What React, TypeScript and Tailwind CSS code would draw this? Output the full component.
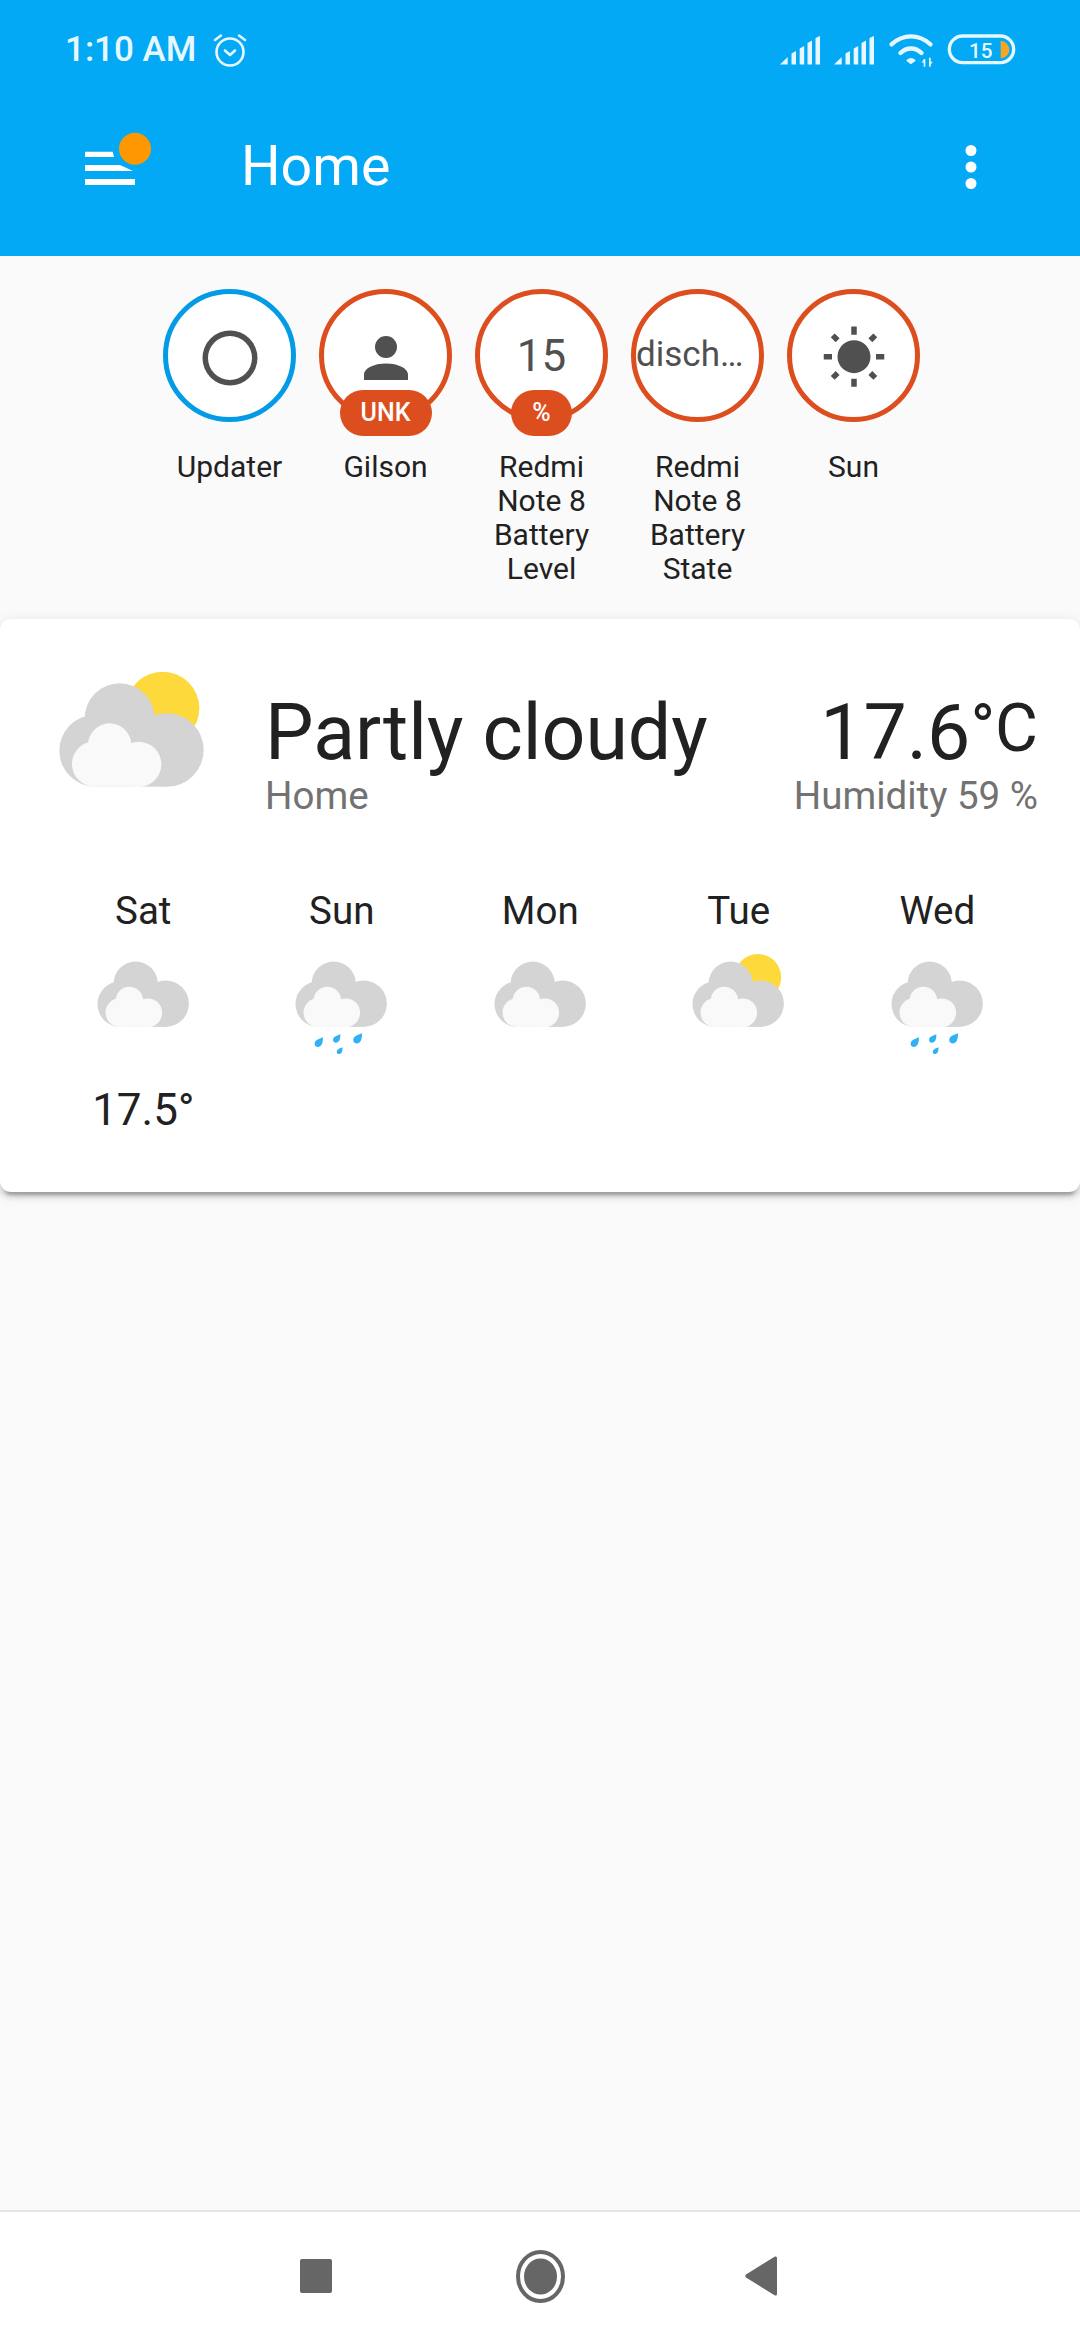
import type { ReactNode } from 'react';

const TEXT_STATUS = '#e6f7ff';

function SignalBars() {
  return (
    <svg width="40" height="29" viewBox="0 0 40 29" fill={TEXT_STATUS}>
      <path d="M0 28.5 L7.7 21 V28.5 Z" />
      <path d="M11.500 17.5 L16 15 V28.5 H11.500 Z" />
      <path d="M19.700 12.5 L24.200 10 V28.5 H19.700 Z" />
      <path d="M27.500 7 L32 4.5 V28.5 H27.500 Z" />
      <path d="M35.500 2 L40 0 V28.5 H35.500 Z" />
    </svg>
  );
}

function WifiIcon() {
  return (
    <svg width="47" height="35" viewBox="445 98 140 105" fill="none" stroke={TEXT_STATUS}>
      <path d="M455 132 C490 100 537 100 572 132" strokeWidth="13" strokeLinecap="round" />
      <path d="M482 158 C500 140 527 140 545 158" strokeWidth="13" strokeLinecap="round" />
      <path d="M499 181 C507 170 520 170 528 181 L513 192 Z" fill={TEXT_STATUS} stroke="none" />
      <path d="M554 176 V199 M570 172 V199" strokeWidth="5" />
      <path d="M547 186 L554 176 L554 186 Z M570 195 L577 185 L570 185 Z" fill={TEXT_STATUS} strokeWidth="2" />
    </svg>
  );
}

function BatteryIcon() {
  return (
    <svg width="70" height="32" viewBox="623 100 210 96">
      <rect x="630" y="106" width="193" height="80" rx="40" fill="none" stroke={TEXT_STATUS} strokeWidth="10" />
      <text x="724" y="173" textAnchor="middle" fontSize="62" fontWeight="500" fontFamily="Roboto" fill={TEXT_STATUS}>
        15
      </text>
      <path d="M784 120 C800 122 810 134 810 147 C810 160 800 171 784 173 Z" fill="#f5a623" />
    </svg>
  );
}

function AlarmIcon() {
  return (
    <svg width="36" height="36" viewBox="0 0 36 36" fill="none" stroke={TEXT_STATUS} strokeWidth="2.6" strokeLinecap="round" strokeLinejoin="round">
      <circle cx="18" cy="20" r="13.5" />
      <path d="M13 18.5 L18 23 L23 18.5" />
      <path d="M3 8 L9 3.5 M33 8 L27 3.5" />
    </svg>
  );
}

function MenuIcon() {
  return (
    <svg width="70" height="70" viewBox="0 0 70 70">
      <path d="M0 19.700 H27.700 L29 25 H0 Z" fill="#ffffff" />
      <path d="M0 33 H35 L48 39 H0 Z" fill="#ffffff" />
      <path d="M0 47 H50 V53 H0 Z" fill="#ffffff" />
      <circle cx="50" cy="16.700" r="16" fill="#ff9800" />
    </svg>
  );
}

// Same artwork at both sizes, coordinates are from the large icon at 3x
function WeatherIcon({ width, sun, rain }: { width: number; sun?: boolean; rain?: boolean }) {
  const drop = 'M12 -15 C11 -8 13 10 -2 12 C-13 12 -14 -2 -6 -7 C0 -11 8 -13 12 -15 Z';
  return (
    <svg width={width} height={(width * 480) / 450} viewBox="170 180 450 480" className="block">
      {sun && <circle cx="487" cy="295" r="110" fill="#fdd93c" />}
      <g fill="#d4d4d4">
        <circle cx="285" cy="422" r="108" />
        <circle cx="358" cy="325" r="105" />
        <circle cx="500" cy="420" r="110" />
        <rect x="285" y="400" width="215" height="130" />
      </g>
      <g fill="#f9f9f9">
        <circle cx="328" cy="405" r="65" />
        <circle cx="283" cy="462" r="68" />
        <circle cx="415" cy="463" r="68" />
        <rect x="283" y="440" width="132" height="90" />
      </g>
      {rain && (
        <g fill="#30b0f5">
          <path d={drop} transform="translate(287 605) scale(1.7)" />
          <path d={drop} transform="translate(372 587) scale(1.5)" />
          <path d={drop} transform="translate(471 587) scale(1.8)" />
          <path d={drop} transform="translate(386 645) scale(1.2)" />
        </g>
      )}
    </svg>
  );
}

function MdiIcon({ d }: { d: string }) {
  return (
    <svg width="66" height="66" viewBox="0 0 24 24" fill="#505050" className="mt-[5px]">
      <path d={d} />
    </svg>
  );
}

function Badge({
  color,
  label,
  pill,
  pillWidth,
  children,
}: {
  color: string;
  label: string;
  pill?: string;
  pillWidth?: string;
  children: ReactNode;
}) {
  return (
    <div className="flex w-[156px] flex-col items-center">
      <div
        className="relative flex h-[133px] w-[133px] items-center justify-center rounded-full border-[5.5px] bg-white"
        style={{ borderColor: color }}
      >
        {children}
        {pill && (
          <div
            className={`absolute top-[96px] flex h-[46px] items-center justify-center rounded-[23px] bg-[#dd4e1f] text-[25px] font-medium text-white ${pillWidth}`}
          >
            {pill}
          </div>
        )}
      </div>
      <div className="mt-[28px] w-[132px] text-center text-[30px] leading-[34px] text-[#212121]">{label}</div>
    </div>
  );
}

function ForecastDay({ day, sun, rain, temp }: { day: string; sun?: boolean; rain?: boolean; temp?: string }) {
  return (
    <div className="flex w-[198.500px] flex-col items-center">
      <div className="text-[38.500px] leading-[45px] text-[#212121]">{day}</div>
      <div className="mt-[20px] h-[101px]">
        <WeatherIcon width={95} sun={sun} rain={rain} />
      </div>
      {temp && <div className="mt-[30px] text-[44px] leading-[52px] text-[#212121]">{temp}</div>}
    </div>
  );
}

export default function App() {
  return (
    <div className="flex h-[2340px] w-[1080px] flex-col overflow-hidden bg-[#fafafa] font-[Roboto,sans-serif]">
      {/* App header with phone status bar */}
      <header className="h-[256px] bg-[#03a9f4]">
        <div className="flex h-[100px] items-center pl-[65px] pr-[63px]">
          <span className="text-[35px] font-medium text-[#e6f7ff]">1:10 AM</span>
          <span className="ml-[16px]">
            <AlarmIcon />
          </span>
          <div className="ml-auto flex items-center">
            <SignalBars />
            <span className="ml-[14px]">
              <SignalBars />
            </span>
            <span className="ml-[14px]">
              <WifiIcon />
            </span>
            <span className="ml-[12px]">
              <BatteryIcon />
            </span>
          </div>
        </div>
        <div className="flex h-[134px] items-center pl-[85px] pr-[103px]">
          <MenuIcon />
          <h1 className="ml-[86px] text-[55.500px] font-normal text-white">Home</h1>
          <svg width="12" height="44" viewBox="0 0 12 44" fill="#ffffff" className="ml-auto">
            <circle cx="6" cy="5.500" r="5.500" />
            <circle cx="6" cy="22" r="5.500" />
            <circle cx="6" cy="38.500" r="5.500" />
          </svg>
        </div>
      </header>

      {/* Badges */}
      <section className="flex h-[363px] justify-center pl-[3px] pt-[33px]">
        <Badge color="#039be5" label="Updater">
          <MdiIcon d="M12,20A8,8 0 0,1 4,12A8,8 0 0,1 12,4A8,8 0 0,1 20,12A8,8 0 0,1 12,20M12,2A10,10 0 0,0 2,12A10,10 0 0,0 12,22A10,10 0 0,0 22,12A10,10 0 0,0 12,2Z" />
        </Badge>
        <Badge color="#dd4e1f" label="Gilson" pill="UNK" pillWidth="w-[92px]">
          <MdiIcon d="M12,4A4,4 0 0,1 16,8A4,4 0 0,1 12,12A4,4 0 0,1 8,8A4,4 0 0,1 12,4M12,14C16.42,14 20,15.79 20,18V20H4V18C4,15.79 7.58,14 12,14Z" />
        </Badge>
        <Badge color="#dd4e1f" label="Redmi Note 8 Battery Level" pill="%" pillWidth="w-[61px]">
          <span className="text-[44px] text-[#505050]">15</span>
        </Badge>
        <Badge color="#dd4e1f" label="Redmi Note 8 Battery State">
          <span className="w-full whitespace-nowrap text-left text-[35px] text-[#505050]">disch…</span>
        </Badge>
        <Badge color="#dd4e1f" label="Sun">
          <MdiIcon d="M3.55,18.54L4.96,19.95L6.76,18.16L5.34,16.74M11,22.45C11.32,22.45 13,22.45 13,22.45V19.5H11M12,5.5A6,6 0 0,0 6,11.5A6,6 0 0,0 12,17.5A6,6 0 0,0 18,11.5C18,8.17 15.31,5.5 12,5.5M20,12.5H23V10.5H20M17.24,18.16L19.04,19.95L20.45,18.54L18.66,16.74M20.45,4.46L19.04,3.05L17.24,4.84L18.66,6.26M13,0.55H11V3.5H13M4,10.5H1V12.5H4M6.76,4.84L4.96,3.05L3.55,4.46L5.34,6.26L6.76,4.84Z" />
        </Badge>
      </section>

      {/* Weather card */}
      <section className="h-[573px] rounded-[11px] bg-white shadow-[0_5px_5px_rgba(0,0,0,0.14),0_3px_14px_rgba(0,0,0,0.12),0_8px_3px_-5px_rgba(0,0,0,0.2)]">
        <div className="flex h-[240px] pl-[57px] pr-[42px] pt-[51px]">
          <WeatherIcon width={150} sun />
          <div className="ml-[58px] mt-[23px]">
            <div className="text-[77px] leading-[80px] text-[#212121]">Partly cloudy</div>
            <div className="text-[38.500px] leading-[45px] text-[#727272]">Home</div>
          </div>
          <div className="ml-auto mt-[23px] text-right">
            <div className="h-[80px] text-[77px] leading-[80px] text-[#212121]">
              17.6<span className="relative top-[-8px] text-[66px] leading-none">°C</span>
            </div>
            <div className="text-[38.500px] leading-[45px] text-[#727272]">Humidity 59 %</div>
          </div>
        </div>
        <div className="flex pl-[44px] pt-[29px]">
          <ForecastDay day="Sat" temp="17.5°" />
          <ForecastDay day="Sun" rain />
          <ForecastDay day="Mon" />
          <ForecastDay day="Tue" sun />
          <ForecastDay day="Wed" rain />
        </div>
      </section>

      {/* Android navigation bar */}
      <nav className="mt-auto flex h-[130px] items-center justify-center border-t-2 border-[#e6e6e6] bg-white pr-[4px]">
        <svg width="32" height="34" viewBox="0 0 32 34" fill="#666666">
          <rect width="32" height="34" rx="2" />
        </svg>
        <svg width="49" height="53" viewBox="0 0 49 53" className="ml-[184px]">
          <ellipse cx="24.500" cy="26.500" rx="22.500" ry="24.500" fill="none" stroke="#666666" strokeWidth="4" />
          <ellipse cx="24.500" cy="26.500" rx="16.500" ry="18" fill="#666666" />
        </svg>
        <svg width="32" height="40" viewBox="0 0 32 40" fill="#666666" className="ml-[180px]">
          <path d="M30 0.500 Q32 0 32 2 V38 Q32 40 30 39.500 L1 21.500 Q-0.500 20 1 18.500 Z" />
        </svg>
      </nav>
    </div>
  );
}
